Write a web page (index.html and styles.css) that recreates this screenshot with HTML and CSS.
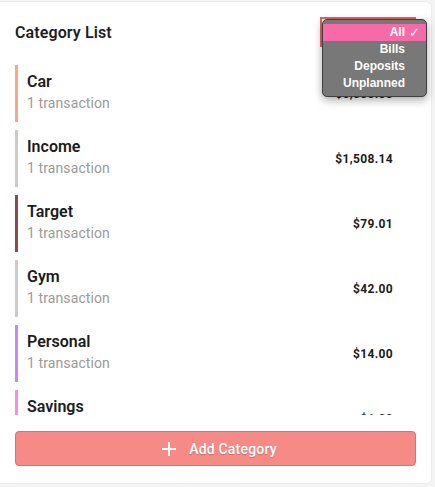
FILE: index.html
```html
<!DOCTYPE html>
<html>
<head>
<meta charset="utf-8">
<link rel="stylesheet" href="styles.css">
</head>
<body>
<div class="card">
  <div class="header">
    <h2 class="title">Category List</h2>
    <div class="select">
      <div class="menu">
        <div class="opt active">All<span class="check">✓</span></div>
        <div class="opt">Bills</div>
        <div class="opt">Deposits</div>
        <div class="opt">Unplanned</div>
      </div>
    </div>
  </div>
  <div class="list">
    <div class="row c-car"><div class="info"><div class="name">Car</div><div class="sub">1 transaction</div></div><div class="amt">$5,000.00</div></div>
    <div class="row c-grey"><div class="info"><div class="name">Income</div><div class="sub">1 transaction</div></div><div class="amt">$1,508.14</div></div>
    <div class="row c-target"><div class="info"><div class="name">Target</div><div class="sub">1 transaction</div></div><div class="amt">$79.01</div></div>
    <div class="row c-grey"><div class="info"><div class="name">Gym</div><div class="sub">1 transaction</div></div><div class="amt">$42.00</div></div>
    <div class="row c-personal"><div class="info"><div class="name">Personal</div><div class="sub">1 transaction</div></div><div class="amt">$14.00</div></div>
    <div class="row c-savings"><div class="info"><div class="name">Savings</div><div class="sub">1 transaction</div></div><div class="amt">$1.00</div></div>
  </div>
  <button class="add">
    <svg width="14" height="14" viewBox="0 0 14 14"><path d="M7 0V14M0 7H14" stroke="#fff" stroke-width="2"/></svg>
    <span>Add Category</span>
  </button>
</div>
</body>
</html>
```

FILE: styles.css
```css
html, body {
  margin: 0;
  padding: 0;
  background: #f4f4f4;
  font-family: Roboto, "Noto Sans", sans-serif;
}
.card {
  box-sizing: border-box;
  width: 442px;
  margin-left: -10px;
  margin-top: 1px;
  background: #fff;
  border: 1px solid #ececec;
  border-radius: 6px;
  padding: 15px 15px 17px 24px;
}
.header {
  position: relative;
  display: flex;
  align-items: center;
  justify-content: space-between;
  height: 30px;
}
.title {
  margin: 0;
  font-size: 16px;
  font-weight: 600;
  color: #1f1f1f;
  line-height: 20px;
  padding-top: 2px;
  letter-spacing: 0.1px;
}
.select {
  position: relative;
  box-sizing: border-box;
  width: 96px;
  height: 30px;
  border: 2px solid #e06464;
  background: #fff;
}
.menu {
  position: absolute;
  left: 0;
  top: 0;
  width: 105px;
  box-sizing: border-box;
  background: #787878;
  border: 1px solid #3f3f3f;
  border-radius: 5px;
  padding: 4px 0 4px;
  box-shadow: 0 3px 9px rgba(0,0,0,0.35);
  font-family: "Liberation Sans", Arial, sans-serif;
  font-weight: 700;
  font-size: 12px;
  color: #fff;
  z-index: 5;
}
.opt {
  position: relative;
  height: 17px;
  line-height: 17px;
  text-align: right;
  padding-right: 21px;
}
.opt.active {
  background: #f76aa8;
}
.check {
  position: absolute;
  right: 6px;
  top: 0;
  font-weight: 400;
  font-size: 13px;
  font-family: "DejaVu Sans", sans-serif;
}
.list {
  margin-top: 18px;
  height: 350px;
  overflow: hidden;
  display: flex;
  flex-direction: column;
  gap: 8px;
}
.row {
  flex: none;
  height: 57px;
  box-sizing: border-box;
  border-left: 3px solid #ccc;
  padding: 7px 23px 0 9px;
  display: flex;
  align-items: center;
  justify-content: space-between;
}
.info {
  align-self: flex-start;
}
.c-car { border-left-color: #f4aa88; }
.c-grey { border-left-color: #cbcbcb; }
.c-target { border-left-color: #8a4b4b; }
.c-personal { border-left-color: #c88af2; }
.c-savings { border-left-color: #f58cef; }
.name {
  font-size: 16px;
  font-weight: 600;
  line-height: 20px;
  color: #1c1c1c;
}
.sub {
  font-size: 14px;
  line-height: 20px;
  margin-top: 1px;
  color: #9a9a9a;
  letter-spacing: 0.1px;
}
.amt {
  font-size: 12px;
  font-weight: 700;
  color: #1c1c1c;
  margin-top: -7px;
  letter-spacing: 0.35px;
}
.add {
  margin-top: 16px;
  width: 100%;
  height: 35px;
  box-sizing: border-box;
  background: #f58a87;
  border: 1px solid #d87270;
  border-radius: 4px;
  color: #fff;
  font-family: Roboto, "Noto Sans", sans-serif;
  font-size: 14px;
  font-weight: 500;
  letter-spacing: 0.2px;
  display: flex;
  align-items: center;
  justify-content: center;
  gap: 13px;
  text-shadow: 0 1px 1px rgba(0,0,0,0.2);
  padding: 0 0 0 8px;
}
```
